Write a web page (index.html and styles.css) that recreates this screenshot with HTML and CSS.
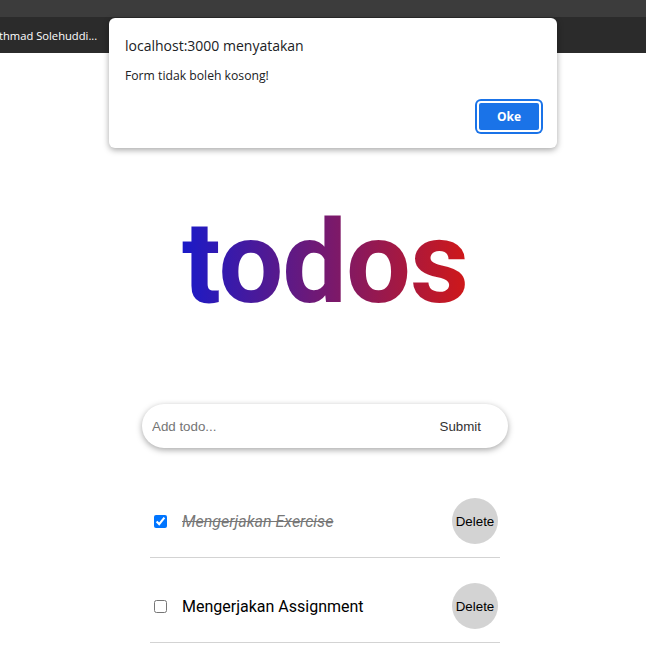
FILE: index.html
```html
<!DOCTYPE html>
<html>
<head>
<meta charset="utf-8">
<link rel="stylesheet" href="styles.css">
</head>
<body>
<div class="chrome">
  <div class="tabstrip"></div>
  <div class="bookmarks"><span class="bm">thmad Solehuddi...</span></div>
</div>
<main class="app">
  <h1 class="title">todos</h1>
  <form class="add-form">
    <input class="add-input" type="text" placeholder="Add todo...">
    <button class="add-btn" type="button">Submit</button>
  </form>
  <ul class="list">
    <li class="item">
      <input class="check" type="checkbox" checked>
      <span class="label done">Mengerjakan Exercise</span>
      <button class="del" type="button">Delete</button>
    </li>
    <li class="item">
      <input class="check" type="checkbox">
      <span class="label">Mengerjakan Assignment</span>
      <button class="del" type="button">Delete</button>
    </li>
  </ul>
</main>
<div class="dialog">
  <div class="dlg-title">localhost:3000 menyatakan</div>
  <div class="dlg-msg">Form tidak boleh kosong!</div>
  <div class="dlg-actions"><button class="dlg-ok" type="button">Oke</button></div>
</div>
</body>
</html>
```
FILE: styles.css
```css
html, body { margin: 0; padding: 0; background: #fff; }
body { font-family: Roboto, "Liberation Sans", sans-serif; }

.chrome { display: flex; flex-direction: column; }
.tabstrip { height: 17px; background: #3c3c3c; }
.bookmarks { height: 36px; background: #2b2b2b; display: flex; align-items: center; overflow: hidden; }
.bm { color: #fff; font-family: "Open Sans", "Noto Sans", sans-serif; font-size: 11.2px; white-space: nowrap; margin-left: -1px; }

.app { width: 366px; margin: 0 auto; padding-left: 4px; display: flex; flex-direction: column; align-items: center; }

.title {
  margin: 154px 0 0;
  font-family: Roboto, sans-serif;
  font-weight: 700;
  font-size: 115px;
  line-height: 112px;
  letter-spacing: -1px;
  background: linear-gradient(90deg, #1a1ac8, #d01818);
  -webkit-background-clip: text;
  background-clip: text;
  color: transparent;
}

.add-form {
  margin-top: 85px;
  width: 366px;
  height: 44px;
  box-sizing: border-box;
  border-radius: 22px;
  background: #fff;
  box-shadow: 0 2px 6px rgba(0,0,0,0.35);
  display: flex;
  align-items: center;
  padding: 0 27px 0 10px;
}
.add-input { flex: 1; border: none; outline: none; font-family: "Liberation Sans", Arial, sans-serif; font-size: 13.333px; color: #333; background: transparent; padding: 0; }
.add-input::placeholder { color: #757575; }
.add-btn { border: none; background: transparent; font-family: "Liberation Sans", Arial, sans-serif; font-size: 13.333px; color: #333; padding: 0; }

.list { list-style: none; margin: 25px 0 0; padding: 0; width: 350px; }
.item { display: flex; align-items: center; padding: 25px 2px 13px 0; border-bottom: 1px solid #d3d3d3; }
.check { width: 13px; height: 13px; margin: 0 15px 0 4px; accent-color: #0075ff; }
.label { flex: 1; font-size: 16px; color: #000; }
.label.done { font-style: italic; text-decoration: line-through; color: #777; }
.del { width: 46px; height: 46px; border-radius: 50%; border: none; background: #d3d3d3; font-family: "Liberation Sans", Arial, sans-serif; font-size: 13.333px; color: #000; padding: 0; }

.dialog {
  position: absolute;
  left: 109px;
  top: 18px;
  width: 448px;
  height: 130px;
  box-sizing: border-box;
  background: #fff;
  border-radius: 6px;
  box-shadow: 0 2px 6px rgba(0,0,0,0.35);
  padding: 19px 16px 16px;
  font-family: "Open Sans", "Noto Sans", sans-serif;
  color: #202124;
  display: flex;
  flex-direction: column;
}
.dlg-title { font-size: 14px; line-height: 18px; }
.dlg-msg { font-size: 12.2px; line-height: 16px; margin-top: 13px; }
.dlg-actions { margin-top: auto; display: flex; justify-content: flex-end; }
.dlg-ok {
  width: 64px; height: 31px; box-sizing: border-box;
  background: #1a73e8; color: #fff; border: 2px solid #fff; border-radius: 4px;
  box-shadow: 0 0 0 2px #1a73e8;
  font-family: "Open Sans", "Noto Sans", sans-serif; font-weight: 700; font-size: 12px;
  margin-right: 0;
}
```
